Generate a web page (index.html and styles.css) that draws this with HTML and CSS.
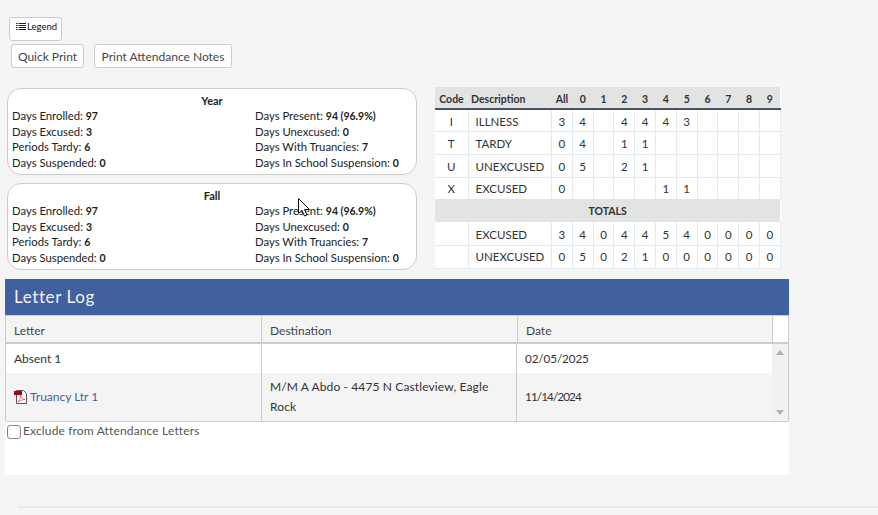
FILE: index.html
```html
<!DOCTYPE html>
<html lang="en">
<head>
<meta charset="utf-8">
<title>Attendance</title>
<link rel="stylesheet" href="styles.css">
</head>
<body>
<div class="page">
  <div class="legend-row">
    <button class="btn btn-legend">
      <svg class="list-icon" width="10" height="8" viewBox="0 0 10 8"><path d="M0 .5h1.5M0 2.5h1.5M0 4.5h1.5M0 6.5h1.5M2.5 .5h7.5M2.5 2.5h7.5M2.5 4.5h7.5M2.5 6.5h7.5" stroke="#222" stroke-width="1" fill="none"/></svg>Legend
    </button>
  </div>
  <div class="print-row">
    <button class="btn btn-print">Quick Print</button>
    <button class="btn btn-print">Print Attendance Notes</button>
  </div>
  <div class="summary">
    <div class="cards">
      <section class="card">
        <h3 class="card-title">Year</h3>
        <div class="stats">
          <div>Days Enrolled: <b>97</b></div><div>Days Present: <b>94 (96.9%)</b></div>
          <div>Days Excused: <b>3</b></div><div>Days Unexcused: <b>0</b></div>
          <div>Periods Tardy: <b>6</b></div><div>Days With Truancies: <b>7</b></div>
          <div>Days Suspended: <b>0</b></div><div>Days In School Suspension: <b>0</b></div>
        </div>
      </section>
      <section class="card">
        <h3 class="card-title">Fall</h3>
        <div class="stats">
          <div>Days Enrolled: <b>97</b></div><div>Days Present: <b>94 (96.9%)</b></div>
          <div>Days Excused: <b>3</b></div><div>Days Unexcused: <b>0</b></div>
          <div>Periods Tardy: <b>6</b></div><div>Days With Truancies: <b>7</b></div>
          <div>Days Suspended: <b>0</b></div><div>Days In School Suspension: <b>0</b></div>
        </div>
      </section>
    </div>
    <table class="codes">
      <colgroup><col class="c-code"><col class="c-desc"><col span="11" class="c-num"></colgroup>
      <thead>
        <tr><th>Code</th><th class="left">Description</th><th>All</th><th>0</th><th>1</th><th>2</th><th>3</th><th>4</th><th>5</th><th>6</th><th>7</th><th>8</th><th>9</th></tr>
      </thead>
      <tbody>
        <tr class="r1"><td>I</td><td class="desc">ILLNESS</td><td>3</td><td>4</td><td></td><td>4</td><td>4</td><td>4</td><td>3</td><td></td><td></td><td></td><td></td></tr>
        <tr class="r2"><td>T</td><td class="desc">TARDY</td><td>0</td><td>4</td><td></td><td>1</td><td>1</td><td></td><td></td><td></td><td></td><td></td><td></td></tr>
        <tr class="r2"><td>U</td><td class="desc">UNEXCUSED</td><td>0</td><td>5</td><td></td><td>2</td><td>1</td><td></td><td></td><td></td><td></td><td></td><td></td></tr>
        <tr class="r3"><td>X</td><td class="desc">EXCUSED</td><td>0</td><td></td><td></td><td></td><td></td><td>1</td><td>1</td><td></td><td></td><td></td><td></td></tr>
        <tr class="totals"><td colspan="13">TOTALS</td></tr>
        <tr class="r2"><td></td><td class="desc">EXCUSED</td><td>3</td><td>4</td><td>0</td><td>4</td><td>4</td><td>5</td><td>4</td><td>0</td><td>0</td><td>0</td><td>0</td></tr>
        <tr class="r4"><td></td><td class="desc">UNEXCUSED</td><td>0</td><td>5</td><td>0</td><td>2</td><td>1</td><td>0</td><td>0</td><td>0</td><td>0</td><td>0</td><td>0</td></tr>
      </tbody>
    </table>
  </div>
  <section class="panel">
    <h2 class="panel-title">Letter Log</h2>
    <div class="grid">
      <div class="grid-head">
        <div class="gh">Letter</div><div class="gh">Destination</div><div class="gh gh-date">Date</div><div class="gh-end"></div>
      </div>
      <div class="grid-body">
        <div class="rows">
          <div class="row row-a">
            <div class="cell">Absent 1</div><div class="cell cell-mid"></div><div class="cell cell-date">02/05/2025</div>
          </div>
          <div class="row row-b">
            <div class="cell cell-link"><svg class="pdf" width="13" height="14" viewBox="0 0 13 14"><path d="M2.500 .5h7l3 3v10h-10z" fill="#fff" stroke="#555"/><rect x="0" y="1" width="8" height="4" fill="#b10009"/><path d="M4 12c2-2 3-5 2.500-7 1 3 2.500 4 4.500 4.500-2.500 0-5 1-7 2.500z" fill="none" stroke="#d9534f" stroke-width=".8"/></svg><a class="link" href="#">Truancy Ltr 1</a></div>
            <div class="cell cell-mid cell-wrap">M/M A Abdo - 4475 N Castleview, Eagle Rock</div>
            <div class="cell cell-date cell-narrow">11/14/2024</div>
          </div>
        </div>
        <div class="scrollbar">
          <span class="arrow-up"></span><span class="arrow-down"></span>
        </div>
      </div>
    </div>
    <label class="exclude"><input class="check" type="checkbox"><span>Exclude from Attendance Letters</span></label>
  </section>
  <div class="rule"></div>
</div>
<svg class="cursor" width="13" height="20" viewBox="0 0 13 20"><path d="M.5 .5v15l3.500-3.200 2.500 5.700 2.500-1-2.500-5.500h5z" fill="#fff" stroke="#111" stroke-width="1"/></svg>
</body>
</html>
```
FILE: styles.css
```css
* { box-sizing: border-box; }
html, body { margin: 0; padding: 0; }
body {
  background: #f5f5f5;
  color: #222;
  font-family: Lato, "Open Sans", sans-serif;
  font-size: 12px;
  overflow: hidden;
  height: 515px;
  position: relative;
}
.page { padding: 17px 0 0 5px; width: 878px; }
.legend-row { padding-left: 4px; height: 27px; }
.btn {
  display: inline-flex;
  align-items: center;
  background: #fff;
  border: 1px solid #ccc;
  border-radius: 3px;
  font-family: inherit;
  padding: 0;
  white-space: nowrap;
}
.btn-legend { width: 53px; height: 24px; padding: 0 0 5px 6px; font-size: 9.500px; color: #111; }
.list-icon { margin-right: 1px; }
.print-row { display: flex; gap: 10px; padding-left: 6px; height: 44px; }
.btn-print { height: 24px; padding: 0; font-size: 12px; color: #444; justify-content: center; }
.btn-print:first-child { width: 73px; }
.btn-print:last-child { width: 138px; }
.summary { display: flex; align-items: flex-start; padding-left: 2px; }
.cards { width: 410px; display: flex; flex-direction: column; gap: 8px; margin-right: 18px; }
.card {
  height: 87px;
  background: #fff;
  border: 1px solid #ccc;
  border-radius: 14px;
  padding: 5px 4px 0;
}
.card-title { margin: 0; font-size: 11px; font-weight: 700; text-align: center; color: #222; line-height: 14px; }
.stats {
  display: grid;
  grid-template-columns: 243px 1fr;
  grid-auto-rows: 15.670px;
  font-size: 11.300px;
  line-height: 15px;
  white-space: nowrap;
  color: #222;
}
.stats b { font-size: 10.500px; line-height: 1; }
.codes {
  width: 345px;
  table-layout: fixed;
  border-collapse: collapse;
  margin-top: -1px;
  background: #fff;
  color: #333;
  font-size: 11.500px;
}
.c-code { width: 33px; }
.c-desc { width: 83.500px; }
.c-num { width: 20.800px; }
.codes th {
  height: 22px;
  background: #e2e3e3;
  border-bottom: 2px solid #4a5263;
  font-size: 10.500px;
  font-weight: 700;
  text-align: center;
  padding: 2px 0 0;
  white-space: nowrap;
}
.codes th.left { text-align: left; padding-left: 3px; }
.codes td {
  border: 1px solid #e4ebf0;
  border-top: 0;
  border-left: 0;
  text-align: center;
  padding: 0;
  white-space: nowrap;
}
.codes .r1 td, .codes .r2 td { padding-top: 2px; }
.codes .desc { text-align: left; padding-left: 7px; }
.r1 td { height: 22px; }
.r2 td, .r4 td { height: 23px; }
.r3 td { height: 22px; border-bottom: 0; }
.codes .totals td {
  height: 23px;
  background: #e2e3e3;
  font-size: 10.500px;
  font-weight: 700;
  border: 0;
}
.panel {
  margin-top: 9px;
  width: 784px;
  height: 196px;
  background: #fff;
}
.panel-title {
  margin: 0;
  height: 36px;
  background: #41609f;
  color: #f2f2f2;
  font-size: 17px;
  font-weight: 400;
  line-height: 35px;
  padding-left: 9px;
  letter-spacing: .6px;
}
.grid { border: 1px solid #ccc; border-top: 0; border-radius: 0 0 2px 2px; }
.grid-head { display: flex; height: 29px; background: #f4f4f4; border-bottom: 2px solid #ccc; border-top: 1px solid #ccc; }
.gh { width: 256px; padding: 0 8px; line-height: 29px; border-right: 1px solid #ccc; color: #444; }
.gh-date { width: 255px; }
.gh-end { flex: 1; background: #fff; }
.grid-body { display: flex; height: 77px; }
.rows { width: 766px; }
.row { display: flex; color: #333; }
.row-a { height: 29px; background: #fff; }
.row-b { height: 48px; background: #f4f4f4; }
.cell { width: 256px; display: flex; align-items: center; padding: 0 8px; border-right: 1px solid #ccc; }
.cell-mid { width: 255px; }
.cell-date { width: 255px; border-right: 0; letter-spacing: -.1px; font-size: 11.700px; padding-bottom: 2px; }
.cell-narrow { letter-spacing: -.9px; }
.cell-link { padding-bottom: 2px; }
.cell-wrap { line-height: 20px; letter-spacing: .12px; }
.pdf { margin-right: 3px; margin-top: 2px; flex: none; }
.link { color: #45609e; text-decoration: none; }
.scrollbar {
  flex: 1;
  background: #f1f1f1;
  display: flex;
  flex-direction: column;
  justify-content: space-between;
  align-items: center;
  padding: 6px 0 6px;
}
.arrow-up, .arrow-down { width: 0; height: 0; border-left: 4px solid transparent; border-right: 4px solid transparent; }
.arrow-up { border-bottom: 5px solid #b0b0b0; }
.arrow-down { border-top: 5px solid #b0b0b0; }
.exclude { display: flex; align-items: flex-start; padding: 3px 0 0 2px; color: #555; line-height: 12px; letter-spacing: .15px; }
.check { appearance: none; width: 14px; height: 14px; margin: 0 2px 0 0; background: #fff; border: 1px solid #888; border-radius: 3px; }
.rule { margin: 31px 0 0 13px; height: 2px; background: #e8e8ee; }
.cursor { position: absolute; left: 298px; top: 198px; }
```
